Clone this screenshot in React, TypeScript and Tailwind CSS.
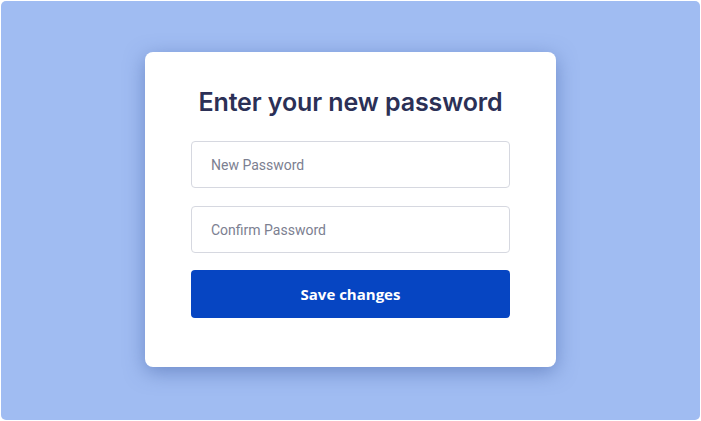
export default function App() {
  return (
    <div className="h-[421px] w-[701px] bg-white p-px pr-0 pb-0">
      <div className="flex h-[419px] w-[699px] items-center justify-center rounded-[5px] bg-[#a0bcf2] pb-[2px]">
        <div className="w-[411px] rounded-lg bg-white px-[46px] pt-[34px] pb-[49px] shadow-[0_5px_20px_rgba(60,90,160,0.5)]">
          <h1 className="h-8 text-center font-['Inter',sans-serif] text-[25px] leading-8 font-semibold tracking-[-0.1px] text-[#2b3056]">
            Enter your new password
          </h1>
          <form className="mt-[23px] flex flex-col" onSubmit={(e) => e.preventDefault()}>
            <input
              type="password"
              placeholder="New Password"
              className="h-[47px] rounded-[4px] border border-[#d6d8e0] px-[19px] font-['Roboto',sans-serif] text-sm text-[#2b3056] outline-none placeholder:text-[#7c8091]"
            />
            <input
              type="password"
              placeholder="Confirm Password"
              className="mt-[18px] h-[47px] rounded-[4px] border border-[#d6d8e0] px-[19px] font-['Roboto',sans-serif] text-sm text-[#2b3056] outline-none placeholder:text-[#7c8091]"
            />
            <button
              type="submit"
              className="mt-[17px] h-[48px] rounded-[4px] bg-[#0645c2] font-['Open_Sans',sans-serif] text-[15px] font-bold text-white"
            >
              Save changes
            </button>
          </form>
        </div>
      </div>
    </div>
  );
}
